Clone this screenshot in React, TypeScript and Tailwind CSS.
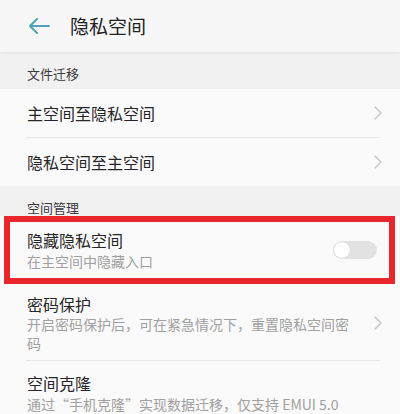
function Chevron() {
  return (
    <svg width="8" height="14" viewBox="0 0 8 14" fill="none">
      <path d="M1 1l6 6-6 6" stroke="#c4c4c4" strokeWidth="1.4" strokeLinecap="round" strokeLinejoin="round" />
    </svg>
  )
}

function NavRow({ title }: { title: string }) {
  return (
    <div className="h-[48px] flex items-center justify-between pl-[27px] pr-[18px]">
      <span className="text-[16px] text-[#262626]">{title}</span>
      <Chevron />
    </div>
  )
}

function Divider() {
  return <div className="h-px bg-[#e6e6e6] ml-[26px] mr-[20px]" />
}

export default function App() {
  return (
    <div
      className="w-[400px] h-[414px] overflow-hidden bg-[#f9f9f9]"
      style={{ fontFamily: '"Noto Sans CJK SC", "Noto Sans", sans-serif' }}
    >
      {/* header */}
      <div className="h-[52px] flex items-center bg-[#f7f7f7] shadow-[0_1px_3px_rgba(0,0,0,0.08)] relative">
        <svg className="ml-[28px]" width="22" height="16" viewBox="0 0 22 16" fill="none">
          <path d="M21 8H2M9 1L2 8l7 7" stroke="#4aa3b8" strokeWidth="2" strokeLinecap="round" strokeLinejoin="round" />
        </svg>
        <span className="ml-[20px] text-[19px] text-[#222]">隐私空间</span>
      </div>

      {/* 文件迁移 */}
      <div className="h-[37px] flex items-center pt-[7px] pl-[27px] bg-[#f1f1f1]">
        <span className="text-[13px] text-[#3a3a3a] leading-[18px]">文件迁移</span>
      </div>
      <div className="bg-[#fafafa]">
        <NavRow title="主空间至隐私空间" />
        <Divider />
        <NavRow title="隐私空间至主空间" />
      </div>

      {/* 空间管理 */}
      <div className="h-[30px] flex items-end pl-[27px] bg-[#f1f1f1]">
        <span className="text-[13px] text-[#3a3a3a] leading-[16px]">空间管理</span>
      </div>

      <div className="bg-[#fafafa]">
        <div className="ml-[4px] mr-[5px] h-[68px] border-[6px] border-[#e8262b] flex items-center justify-between pl-[17px] pr-[12px]">
          <div className="flex flex-col">
            <span className="text-[16px] leading-[22px] text-[#262626]">隐藏隐私空间</span>
            <span className="text-[14px] leading-[20px] text-[#a0a0a0]">在主空间中隐藏入口</span>
          </div>
          <div className="w-[44px] h-[18px] rounded-full bg-[#e2e2e2] relative">
            <div className="absolute left-[1px] top-[1px] w-[16px] h-[16px] rounded-full bg-white shadow-[0_0_1px_rgba(0,0,0,0.2)]" />
          </div>
        </div>

        <div className="flex items-center justify-between pl-[27px] pr-[18px] pt-[9px] pb-[7px]">
          <div className="flex flex-col">
            <span className="text-[16px] leading-[22px] text-[#262626]">密码保护</span>
            <span className="w-[326px] text-[14px] leading-[19px] text-[#a0a0a0]">
              开启密码保护后，可在紧急情况下，重置隐私空间密码
            </span>
          </div>
          <Chevron />
        </div>
        <Divider />

        <div className="flex flex-col pl-[27px] pt-[11px]">
          <span className="text-[16px] leading-[22px] text-[#262626]">空间克隆</span>
          <span className="w-[326px] text-[14px] leading-[20px] text-[#a0a0a0] whitespace-nowrap overflow-hidden">
            通过“手机克隆”实现数据迁移，仅支持 EMUI 5.0
          </span>
        </div>
      </div>
    </div>
  )
}
